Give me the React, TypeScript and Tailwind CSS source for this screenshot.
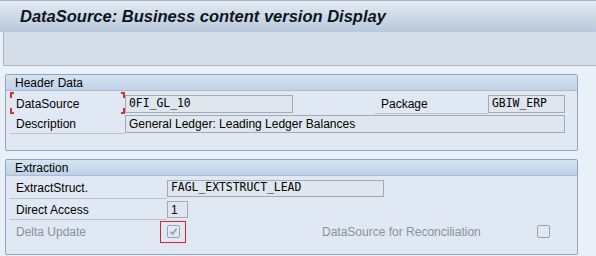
const sans = { fontFamily: '"Liberation Sans", Arial, sans-serif' };

function Bracket() {
  // red corner marks around the focused label
  return (
    <>
      <span className="absolute left-0 top-0 w-[4px] h-[6px] border-l-2 border-t-2 border-[#d0342c]" />
      <span className="absolute left-0 bottom-0 w-[4px] h-[6px] border-l-2 border-b-2 border-[#d0342c]" />
      <span className="absolute right-0 top-0 w-[4px] h-[6px] border-r-2 border-t-2 border-[#d0342c]" />
      <span className="absolute right-0 bottom-0 w-[4px] h-[6px] border-r-2 border-b-2 border-[#d0342c]" />
    </>
  );
}

function Label({
  text,
  width,
  line = true,
  disabled = false,
  focus = false,
  className = "",
}: {
  text: string;
  width: string;
  line?: boolean;
  disabled?: boolean;
  focus?: boolean;
  className?: string;
}) {
  return (
    <div
      className={`relative flex items-center h-full shrink-0 pl-[6px] text-[12px] ${width} ${
        line ? "border-b border-[#b4c1ce]" : ""
      } ${disabled ? "text-[#8b9199]" : "text-black"} ${className}`}
    >
      {focus && <Bracket />}
      {text}
    </div>
  );
}

function Field({
  value,
  width,
  mono = true,
  h = "h-[18px]",
}: {
  value: string;
  width: string;
  mono?: boolean;
  h?: string;
}) {
  return (
    <div
      className={`flex items-center shrink-0 px-[3px] bg-[#dfe6ee] border border-[#a2abb5] text-black ${width} ${h} ${
        mono ? "text-[11.4px]" : "text-[12px]"
      }`}
      style={mono ? { fontFamily: '"DejaVu Sans Mono", "Liberation Mono", monospace' } : undefined}
    >
      {value}
    </div>
  );
}

function Check({ checked }: { checked?: boolean }) {
  return (
    <div className="w-[13px] h-[13px] rounded-[2px] border border-[#9aa3ad] bg-[#e2e8ef] flex items-center justify-center">
      {checked && (
        <svg width="9" height="9" viewBox="0 0 9 9">
          <path d="M1.5 4.8 L3.6 7 L7.6 1.6" fill="none" stroke="#8a939c" strokeWidth="1.4" />
        </svg>
      )}
    </div>
  );
}

function Group({ title, children, h }: { title: string; children: React.ReactNode; h: string }) {
  return (
    <div className={`w-[573px] ${h} border border-[#91a6bc] rounded-[2px] bg-[#dfe8f3] flex flex-col`}>
      <div className="h-[16px] shrink-0 flex items-center pl-[9px] text-[12px] text-black bg-gradient-to-b from-[#d6e3f0] to-[#bed2e7] border-b border-[#a8bdd2]">
        {title}
      </div>
      {children}
    </div>
  );
}

export default function App() {
  return (
    <div className="w-[596px] h-[256px] overflow-hidden bg-[#eaf0f7] flex flex-col" style={sans}>
      {/* Title bar */}
      <div className="h-[32px] shrink-0 border-t border-[#a9b5c3] bg-gradient-to-b from-[#e3eaf2] to-[#b8c8da] flex items-center pl-[20px]">
        <span className="text-[16.5px] font-bold italic text-[#0c1422]">
          DataSource: Business content version Display
        </span>
      </div>

      {/* Application toolbar */}
      <div className="h-[34px] shrink-0 bg-[#d4dde8] border-l border-[#a9b5c3] ml-[3px] border-b border-b-[#aab6c3]" />

      <div className="flex flex-col pl-[5px] pt-[8px] gap-[8px]">
        <Group title="Header Data" h="h-[77px]">
          <div className="flex items-end h-[22px] pl-[4px] mt-[1px]">
            <Label text="DataSource" width="w-[115px]" line={false} focus className="pt-[2px]" />
            <div className="h-full flex items-end pb-[1px]">
              <Field value="0FI_GL_10" width="w-[168px]" />
            </div>
            <div className="w-[82px]" />
            <Label text="Package" width="w-[113px]" className="pl-[3px] pt-[2px]" />
            <div className="h-full flex items-end pb-[1px]">
              <Field value="GBIW_ERP" width="w-[77px]" />
            </div>
          </div>
          <div className="flex items-end h-[20px] pl-[4px]">
            <Label text="Description" width="w-[115px]" className="pt-[1px]" />
            <div className="h-full flex items-end pb-[1px]">
              <Field value="General Ledger: Leading Ledger Balances" width="w-[440px]" mono={false} />
            </div>
          </div>
        </Group>

        <Group title="Extraction" h="h-[96px]">
          <div className="flex items-center h-[22px] pl-[4px] mt-[1px]">
            <Label text="ExtractStruct." width="w-[157px]" className="pt-[1px]" />
            <Field value="FAGL_EXTSTRUCT_LEAD" width="w-[217px]" h="h-[17px]" />
          </div>
          <div className="flex items-center h-[21px] pl-[4px]">
            <Label text="Direct Access" width="w-[157px]" className="pt-[1px]" />
            <Field value="1" width="w-[21px]" mono={false} h="h-[17px]" />
          </div>
          <div className="flex items-center h-[23px] pl-[4px]">
            <Label text="Delta Update" width="w-[150px]" line={false} disabled />
            <div className="w-[26px] h-[22px] border border-[#d8262c] flex items-center justify-center shrink-0">
              <Check checked />
            </div>
            <div className="w-[136px]" />
            <span className="text-[12px] text-[#8b9199] w-[215px]">DataSource for Reconciliation</span>
            <Check />
          </div>
        </Group>
      </div>
    </div>
  );
}
